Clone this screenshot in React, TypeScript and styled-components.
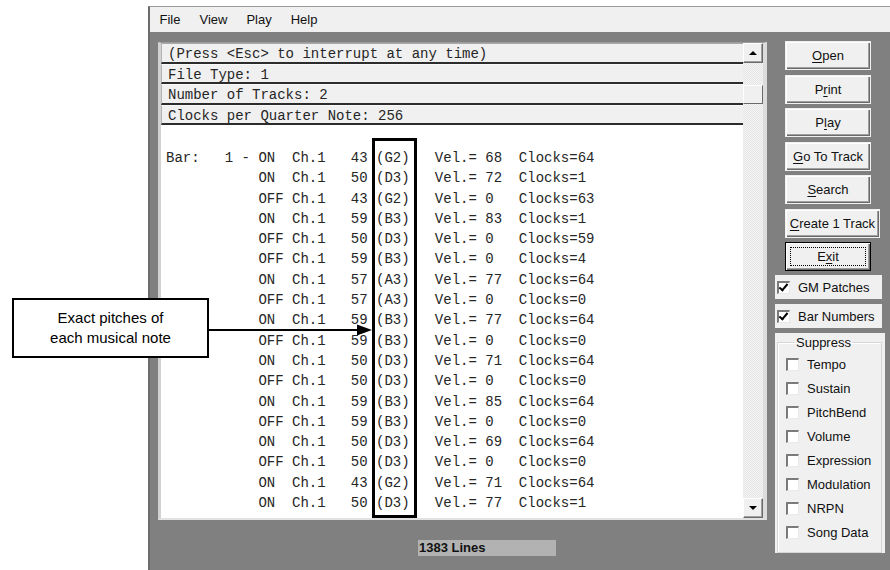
import React from "react";
import styled, { createGlobalStyle } from "styled-components";

const GlobalStyle = createGlobalStyle`
  html, body { margin: 0; padding: 0; background: #fff; }
  body {
    width: 890px;
    height: 570px;
    overflow: hidden;
    font-family: "Liberation Sans", Arial, sans-serif;
  }
`;

const Page = styled.div`
  position: relative;
  width: 890px;
  height: 570px;
  overflow: hidden;
  box-sizing: border-box;
  padding: 6px 0 0 148px;
  background: #fff;
`;

const Window = styled.div`
  width: 760px;
  height: 580px;
  display: flex;
  flex-direction: column;
  background: #808080;
  border-top: 1px solid #9a9a9a;
  border-left: 2px solid #6c6c6c;
`;

const MenuBar = styled.div`
  display: flex;
  align-items: center;
  height: 25px;
  background: #f0f0f0;
  font-size: 13px;
  color: #111;
`;

const MenuItem = styled.span`
  padding: 0 9.5px;
`;

const Client = styled.div`
  display: flex;
  align-items: flex-start;
  padding: 10px 0 0 8px;
`;

const LeftColumn = styled.div`
  display: flex;
  flex-direction: column;
`;

const ListFrame = styled.div`
  display: flex;
  width: 602px;
  height: 475px;
  background: #fff;
  border-top: 1px solid #9c9c9c;
  border-left: 3px solid #d2d2d2;
  border-right: 4px solid #dcdcdc;
  border-bottom: 2px solid #e2e2e2;
`;

const TextColumn = styled.div`
  flex: 1;
  display: flex;
  flex-direction: column;
  font-family: "Liberation Mono", "Courier New", monospace;
  font-size: 14px;
  color: #262626;
  white-space: pre;
  overflow: hidden;
`;

const HeaderRow = styled.div`
  box-sizing: border-box;
  height: 20.5px;
  padding: 2px 0 0 6px;
  line-height: 17px;
  background: #f0f0f0;
  border-top: 1px solid #fafafa;
  border-left: 1px solid #b4b4b4;
  border-bottom: 2px solid #2c2c2c;
  &:first-child {
    border-top-color: #a8a8a8;
  }
`;

const Lines = styled.div`
  padding: 23px 0 0 5px;
  line-height: 20.3px;
`;

const ScrollBar = styled.div`
  width: 20px;
  display: flex;
  flex-direction: column;
  background: repeating-conic-gradient(#f6f6f6 0 25%, #e4e4e4 0 50%) 0 0 / 2px 2px;
`;

const ScrollButton = styled.div<{ $down?: boolean }>`
  box-sizing: border-box;
  height: 20px;
  display: flex;
  align-items: center;
  justify-content: center;
  background: #f0f0f0;
  border-top: 1px solid #fff;
  border-left: 1px solid #fff;
  border-right: 1px solid #6a6a6a;
  border-bottom: 1px solid #6a6a6a;
  box-shadow: inset -1px -1px #a0a0a0;
  margin-top: ${(p) => (p.$down ? "auto" : "0")};
  &::after {
    content: "";
    width: 0;
    height: 0;
    border-left: 4px solid transparent;
    border-right: 4px solid transparent;
    ${(p) =>
      p.$down ? "border-top: 4px solid #000;" : "border-bottom: 4px solid #000;"}
  }
`;

const Thumb = styled.div`
  box-sizing: border-box;
  height: 19px;
  margin-top: 22px;
  background: #f0f0f0;
  border-top: 1px solid #fff;
  border-left: 1px solid #fff;
  border-right: 1px solid #6a6a6a;
  border-bottom: 1px solid #6a6a6a;
`;

const StatusBox = styled.div`
  width: 137px;
  height: 16px;
  margin: 20px 0 0 260px;
  padding-left: 1px;
  background: #b2b2b2;
  font-size: 13px;
  font-weight: bold;
  line-height: 16px;
  color: #111;
`;

const RightColumn = styled.div`
  width: 110px;
  margin: -1px 0 0 8px;
  display: flex;
  flex-direction: column;
  font-size: 13px;
  color: #111;
`;

const ButtonStack = styled.div`
  display: flex;
  flex-direction: column;
  gap: 4.5px;
  padding-left: 10px;
`;

const Button = styled.div<{ $wide?: boolean; $default?: boolean }>`
  position: relative;
  box-sizing: border-box;
  width: ${(p) => (p.$wide ? "95px" : "86px")};
  height: 29px;
  display: flex;
  align-items: center;
  justify-content: center;
  background: #f0f0f0;
  border: 1px solid ${(p) => (p.$default ? "#000" : "transparent")};
  box-shadow: inset 1px 1px #fff, inset -1px -1px #6a6a6a, inset -2px -2px #a0a0a0;
  ${(p) =>
    p.$default &&
    `&::after {
      content: "";
      position: absolute;
      inset: 4px;
      border: 1px dotted #000;
    }`}
  u {
    text-decoration: underline;
    text-underline-offset: 2px;
  }
`;

const CheckPanel = styled.label<{ $gap?: number }>`
  display: flex;
  align-items: center;
  gap: 8px;
  width: 107px;
  height: 24px;
  margin-top: ${(p) => p.$gap ?? 5}px;
  padding-left: 2px;
  box-sizing: border-box;
  background: #f0f0f0;
`;

const Box = styled.span<{ $checked?: boolean }>`
  position: relative;
  box-sizing: border-box;
  width: 13px;
  height: 13px;
  flex: none;
  background: #fff;
  border-top: 2px solid #7a7a7a;
  border-left: 2px solid #7a7a7a;
  border-right: 1px solid #e8e8e8;
  border-bottom: 1px solid #e8e8e8;
  ${(p) =>
    p.$checked &&
    `&::after {
      content: "";
      position: absolute;
      left: 2px;
      top: -1px;
      width: 3px;
      height: 7px;
      border-right: 2.5px solid #000;
      border-bottom: 2.5px solid #000;
      transform: rotate(40deg);
    }`}
`;

const GroupPanel = styled.div`
  width: 110px;
  height: 220px;
  margin-top: 5px;
  box-sizing: border-box;
  padding: 2px 3px 0 2px;
  background: #f0f0f0;
`;

const GroupBox = styled.fieldset`
  margin: 0;
  padding: 2px 0 8px 8px;
  border: 1px solid #d6d6d6;
  box-shadow: inset 1px 1px #fff;
  legend {
    margin-left: 8px;
    padding: 0 2px;
    line-height: 15px;
  }
`;

const GroupRow = styled.div`
  display: flex;
  align-items: center;
  gap: 8px;
  height: 24px;
`;

/* overlays drawn on top of the window */
const PitchMarker = styled.div`
  position: absolute;
  left: 372px;
  top: 138px;
  width: 45px;
  height: 380px;
  box-sizing: border-box;
  border: 3px solid #000;
`;

const Callout = styled.div`
  position: absolute;
  left: 12px;
  top: 298px;
  width: 197px;
  height: 60px;
  box-sizing: border-box;
  display: flex;
  flex-direction: column;
  align-items: center;
  justify-content: center;
  background: #fff;
  border: 2px solid #000;
  font-size: 15px;
  line-height: 20px;
  color: #000;
`;

const Arrow = styled.svg`
  position: absolute;
  left: 209px;
  top: 323px;
`;

type Ev = [boolean, boolean, number, string, number, number];

const events: Ev[] = [
  [true, true, 43, "G2", 68, 64],
  [false, true, 50, "D3", 72, 1],
  [false, false, 43, "G2", 0, 63],
  [false, true, 59, "B3", 83, 1],
  [false, false, 50, "D3", 0, 59],
  [false, false, 59, "B3", 0, 4],
  [false, true, 57, "A3", 77, 64],
  [false, false, 57, "A3", 0, 0],
  [false, true, 59, "B3", 77, 64],
  [false, false, 59, "B3", 0, 0],
  [false, true, 50, "D3", 71, 64],
  [false, false, 50, "D3", 0, 0],
  [false, true, 59, "B3", 85, 64],
  [false, false, 59, "B3", 0, 0],
  [false, true, 50, "D3", 69, 64],
  [false, false, 50, "D3", 0, 0],
  [false, true, 43, "G2", 71, 64],
  [false, true, 50, "D3", 77, 1],
];

const formatLine = ([bar, on, note, pitch, vel, clocks]: Ev) => {
  const lead = bar ? "Bar:   1 - " : " ".repeat(11);
  return (
    lead +
    (on ? "ON " : "OFF").padEnd(4) +
    "Ch.1" +
    String(note).padStart(5) +
    " (" +
    pitch +
    ")   Vel.= " +
    String(vel).padEnd(4) +
    "Clocks=" +
    clocks
  );
};

const suppress = [
  "Tempo",
  "Sustain",
  "PitchBend",
  "Volume",
  "Expression",
  "Modulation",
  "NRPN",
  "Song Data",
];

export default function App() {
  return (
    <Page>
      <GlobalStyle />
      <Window>
        <MenuBar>
          <MenuItem>File</MenuItem>
          <MenuItem>View</MenuItem>
          <MenuItem>Play</MenuItem>
          <MenuItem>Help</MenuItem>
        </MenuBar>
        <Client>
          <LeftColumn>
            <ListFrame>
              <TextColumn>
                <HeaderRow>(Press &lt;Esc&gt; to interrupt at any time)</HeaderRow>
                <HeaderRow>File Type: 1</HeaderRow>
                <HeaderRow>Number of Tracks: 2</HeaderRow>
                <HeaderRow>Clocks per Quarter Note: 256</HeaderRow>
                <Lines>
                  {events.map((e, i) => (
                    <div key={i}>{formatLine(e)}</div>
                  ))}
                </Lines>
              </TextColumn>
              <ScrollBar>
                <ScrollButton />
                <Thumb />
                <ScrollButton $down />
              </ScrollBar>
            </ListFrame>
            <StatusBox>1383 Lines</StatusBox>
          </LeftColumn>
          <RightColumn>
            <ButtonStack>
              <Button><span><u>O</u>pen</span></Button>
              <Button><span>P<u>r</u>int</span></Button>
              <Button><span>P<u>l</u>ay</span></Button>
              <Button><span><u>G</u>o To Track</span></Button>
              <Button><span><u>S</u>earch</span></Button>
              <Button $wide><span><u>C</u>reate 1 Track</span></Button>
              <Button $default><span>E<u>x</u>it</span></Button>
            </ButtonStack>
            <CheckPanel $gap={4}>
              <Box $checked />
              GM Patches
            </CheckPanel>
            <CheckPanel>
              <Box $checked />
              Bar Numbers
            </CheckPanel>
            <GroupPanel>
              <GroupBox>
                <legend>Suppress</legend>
                {suppress.map((s) => (
                  <GroupRow key={s}>
                    <Box />
                    {s}
                  </GroupRow>
                ))}
              </GroupBox>
            </GroupPanel>
          </RightColumn>
        </Client>
      </Window>

      <PitchMarker />
      <Arrow width="164" height="14" viewBox="0 0 164 14">
        <line x1="0" y1="7" x2="150" y2="7" stroke="#000" strokeWidth="2" />
        <polygon points="163,7 148,1.5 148,12.5" fill="#000" />
      </Arrow>
      <Callout>
        <div>Exact pitches of</div>
        <div>each musical note</div>
      </Callout>
    </Page>
  );
}
